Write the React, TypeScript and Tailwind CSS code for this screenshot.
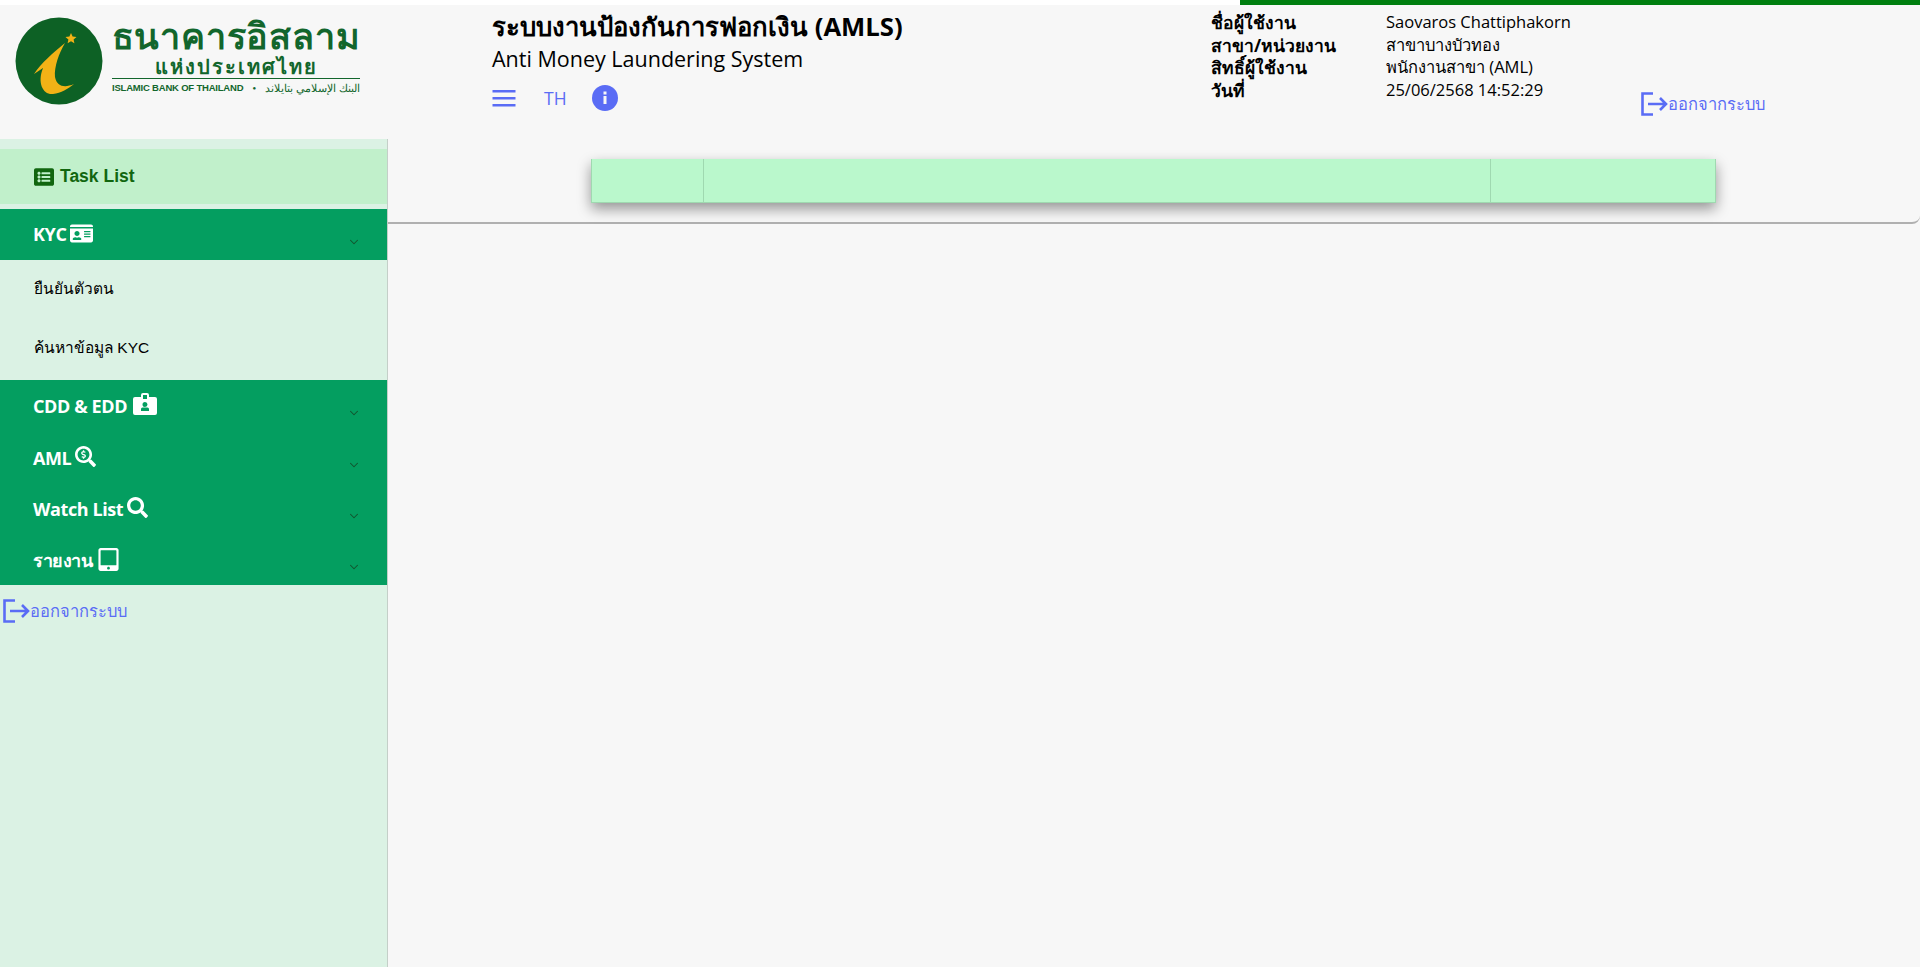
import { FaIdCard, FaListAlt, FaSearch, FaSearchDollar, FaTabletAlt } from "react-icons/fa"
import { ChevronDown } from "lucide-react"
import type { ReactNode } from "react"

function LogoutLink({ className = "" }: { className?: string }) {
  return (
    <div className={`flex items-center text-[#5a6cf5] ${className}`}>
      <svg width="28" height="26" viewBox="0 0 28 26" fill="none" stroke="#5a6cf5" strokeWidth="2.6" className="shrink-0">
        <path d="M13 2.500H2.500v21H13" />
        <path d="M8 13h18M20 7l6 6-6 6" />
      </svg>
      <span className="text-[16.500px] leading-6">ออกจากระบบ</span>
    </div>
  )
}

function BadgeIcon() {
  return (
    <svg width="24" height="22" viewBox="0 0 24 22" className="mt-[-1px] ml-[2px]">
      <path
        fillRule="evenodd"
        fill="#fff"
        d="M2 4h6V2a2 2 0 0 1 2-2h4a2 2 0 0 1 2 2v2h6a2 2 0 0 1 2 2v14a2 2 0 0 1-2 2H2a2 2 0 0 1-2-2V6a2 2 0 0 1 2-2ZM10 2v4h4V2ZM12 9a2.500 2.500 0 1 0 0 5 2.500 2.500 0 0 0 0-5ZM8 16v2h8v-2a1.500 1.500 0 0 0-1.500-1.500h-5A1.500 1.500 0 0 0 8 16Z"
      />
    </svg>
  )
}

function Logo() {
  return (
    <div className="flex items-start pl-[15px] pt-[12px]">
      <svg width="88" height="88" viewBox="0 0 88 88" className="shrink-0">
        <circle cx="44" cy="44" r="43.500" fill="#0d6125" />
        <path
          d="M50 26C38 36 26 46 19 57L28 51C22 66 28 78 38 77C46 76 53 72 59 67C50 71 42 70 40 60C39 50 44 36 50 26Z"
          fill="#f2b216"
        />
        <path d="M56 16l1.600 3.500 3.900.4-2.900 2.600.8 3.800-3.400-2-3.400 2 .8-3.800-2.900-2.600 3.900-.4z" fill="#f2b216" />
      </svg>
      <div className="ml-[9px] flex w-[248px] flex-col items-center text-[#12662c]">
        <div className="h-[38px] whitespace-nowrap text-[36px] leading-[38px] font-bold tracking-[0.8px]">ธนาคารอิสลาม</div>
        <div className="h-[23px] whitespace-nowrap text-[20px] leading-[23px] font-bold tracking-[2px]">แห่งประเทศไทย</div>
        <div className="flex w-full items-center justify-between border-t border-[#12662c] pt-[1px] text-[9.5px] leading-4 font-bold whitespace-nowrap">
          <span className="font-['Liberation_Sans',sans-serif] tracking-[-0.2px]">ISLAMIC BANK OF THAILAND</span>
          <span className="text-[6px]">●</span>
          <span dir="rtl" className="text-[11px] font-normal">البنك الإسلامي بتايلاند</span>
        </div>
      </div>
    </div>
  )
}

function UserInfo() {
  const rows = [
    ["ชื่อผู้ใช้งาน", "Saovaros Chattiphakorn"],
    ["สาขา/หน่วยงาน", "สาขาบางบัวทอง"],
    ["สิทธิ์ผู้ใช้งาน", "พนักงานสาขา (AML)"],
    ["วันที่", "25/06/2568 14:52:29"],
  ]
  return (
    <div className="w-[429px] pt-[6px] leading-[22.6px] text-black">
      {rows.map(([label, value]) => (
        <div key={label} className="flex">
          <div className="w-[175px] text-[17.5px] font-bold">{label}</div>
          <div className="text-[16.5px]">{value}</div>
        </div>
      ))}
    </div>
  )
}

function Header() {
  return (
    <header className="flex h-[134px] bg-[#f7f7f7]">
      <div className="w-[492px] shrink-0">
        <Logo />
      </div>
      <div className="w-[719px] shrink-0 pt-[7px]">
        <div className="text-[25.700px] leading-[30px] font-bold whitespace-nowrap text-black">ระบบงานป้องกันการฟอกเงิน (AMLS)</div>
        <div className="mt-[2px] text-[21.500px] leading-[30px] text-black">Anti Money Laundering System</div>
        <div className="mt-[11px] flex items-center text-[#5a6cf5]">
          <svg width="24" height="17" viewBox="0 0 24 17" fill="#5a6cf5">
            <rect x="0.500" y="0" width="23" height="2.500" />
            <rect x="0.500" y="7" width="23" height="2.500" />
            <rect x="0.500" y="14" width="23" height="2.500" />
          </svg>
          <span className="ml-[28px] w-[48px] text-[17.500px] leading-6">TH</span>
          <svg width="26" height="26" viewBox="0 0 26 26">
            <circle cx="13" cy="13" r="13" fill="#5a6cf5" />
            <rect x="11.500" y="11" width="3" height="8" fill="#f7f7f7" />
            <rect x="11.500" y="6.500" width="3" height="3" fill="#f7f7f7" />
          </svg>
        </div>
      </div>
      <UserInfo />
      <LogoutLink className="mt-[86px] self-start" />
    </header>
  )
}

function MenuGroup({ label, icon, top = "pt-[14px]" }: { label: string; icon: ReactNode; top?: string }) {
  return (
    <div className={`relative flex h-[51.25px] items-start pl-[33px] text-white ${top}`}>
      <span className="text-[18px] leading-6 font-bold tracking-[-0.4px]">{label}</span>
      <span className="ml-[4px] text-[21px]">{icon}</span>
      <ChevronDown size={14} color="#14532d" strokeWidth={1.8} className="absolute top-[26px] right-[26px]" />
    </div>
  )
}

function Sidebar() {
  return (
    <aside className="flex w-[388px] shrink-0 flex-col border-r border-[#c4cfc8] bg-[#dbf2e4] pt-[10px]">
      <div className="flex h-[55px] items-center gap-[6px] bg-[#c1f0cb] pl-[34px] font-['Liberation_Sans',sans-serif] text-[17.500px] font-bold text-[#11660f]">
        <FaListAlt size={20} />
        Task List
      </div>
      <div className="mt-[5px] bg-[#049e60]">
        <MenuGroup label="KYC" icon={<FaIdCard className="text-[23px]" />} top="pt-[13px]" />
      </div>
      <div className="h-[120px] pl-[34px] font-['Liberation_Sans',sans-serif] text-[15.500px] text-black">
        <div className="flex h-[60px] items-start pt-[17px]">ยืนยันตัวตน</div>
        <div className="flex h-[60px] items-start pt-[16px]">ค้นหาข้อมูล KYC</div>
      </div>
      <div className="bg-[#049e60]">
        <MenuGroup label="CDD & EDD" icon={<BadgeIcon />} />
        <MenuGroup label="AML" icon={<FaSearchDollar />} />
        <MenuGroup label="Watch List" icon={<FaSearch />} />
        <MenuGroup label="รายงาน" icon={<FaTabletAlt className="text-[23px]" />} />
      </div>
      <LogoutLink className="mt-[13px] pl-[2px]" />
    </aside>
  )
}

function TaskTable() {
  return (
    <div className="rounded-br-[8px] border-b-2 border-[#b0b0b0] pt-[20px] pr-[204px] pb-[19px] pl-[203px]">
      <div className="flex h-[44px] border-r border-b border-l border-[#9fd9b0] bg-[#baf8cc] shadow-[0_6px_14px_rgba(0,0,0,0.4)]">
        <div className="w-[112px] border-r border-[#9fd9b0]" />
        <div className="w-[787px] border-r border-[#9fd9b0]" />
        <div className="flex-1" />
      </div>
    </div>
  )
}

export default function App() {
  return (
    <div className="flex h-[967px] flex-col overflow-hidden bg-[#f7f7f7] font-['Open_Sans','Noto_Sans',sans-serif]">
      <div className="flex h-[5px] justify-end bg-white">
        <div className="w-[680px] bg-[#007f0f]" />
      </div>
      <Header />
      <div className="flex flex-1">
        <Sidebar />
        <main className="flex-1">
          <TaskTable />
        </main>
      </div>
    </div>
  )
}
